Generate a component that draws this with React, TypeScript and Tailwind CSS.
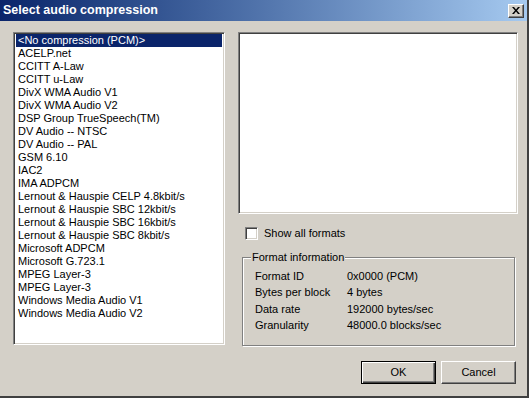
import React from "react";

const items = [
  "<No compression (PCM)>",
  "ACELP.net",
  "CCITT A-Law",
  "CCITT u-Law",
  "DivX WMA Audio V1",
  "DivX WMA Audio V2",
  "DSP Group TrueSpeech(TM)",
  "DV Audio -- NTSC",
  "DV Audio -- PAL",
  "GSM 6.10",
  "IAC2",
  "IMA ADPCM",
  "Lernout & Hauspie CELP 4.8kbit/s",
  "Lernout & Hauspie SBC 12kbit/s",
  "Lernout & Hauspie SBC 16kbit/s",
  "Lernout & Hauspie SBC 8kbit/s",
  "Microsoft ADPCM",
  "Microsoft G.723.1",
  "MPEG Layer-3",
  "MPEG Layer-3",
  "Windows Media Audio V1",
  "Windows Media Audio V2",
];

const info = [
  ["Format ID", "0x0000 (PCM)"],
  ["Bytes per block", "4 bytes"],
  ["Data rate", "192000 bytes/sec"],
  ["Granularity", "48000.0 blocks/sec"],
];

const sunken =
  "border border-t-[#808080] border-l-[#808080] border-r-white border-b-white shadow-[inset_1px_1px_0_#404040,inset_-1px_-1px_0_#d4d0c8]";

export default function App() {
  return (
    <div className="w-[529px] h-[398px] bg-[#d4d0c8] flex flex-col border-b-2 border-r-2 border-b-[#404040] border-r-[#404040] font-[Liberation_Sans,Arial,sans-serif] text-[11px] text-black overflow-hidden">
      {/* Title bar */}
      <div className="h-[21px] shrink-0 bg-gradient-to-r from-[#0a246a] to-[#a6caf0] flex items-center justify-between pl-[3px] pr-[3px]">
        <span className="text-white font-bold text-[12.5px] leading-none">Select audio compression</span>
        <div className="w-[16px] h-[14px] bg-[#d4d0c8] border border-t-white border-l-white border-r-[#404040] border-b-[#404040] shadow-[inset_-1px_-1px_0_#808080] flex items-center justify-center">
          <svg width="8" height="7" viewBox="0 0 8 7">
            <path d="M0 0h2l2 2.5L6 0h2L5 3.5 8 7H6L4 4.5 2 7H0l3-3.5z" fill="#000" />
          </svg>
        </div>
      </div>

      {/* Body */}
      <div className="flex flex-col pt-[11px]">
        <div className="flex pl-[13px] gap-[13px]">
          {/* List */}
          <div className={`w-[212px] h-[313px] bg-white ${sunken} p-[2px] pt-[1px]`}>
            <div className="flex flex-col">
              {items.map((it, i) => (
                <div
                  key={i}
                  className={`h-[13px] leading-[13px] pl-[2px] whitespace-nowrap ${
                    i === 0 ? "bg-[#0a246a] text-white" : ""
                  }`}
                >
                  {it}
                </div>
              ))}
            </div>
          </div>

          {/* Right column */}
          <div className="w-[280px] flex flex-col">
            <div className={`h-[182px] bg-white ${sunken}`} />
            <div className="flex items-center mt-[13px] ml-[7px] gap-[6px] h-[13px]">
              <div className={`w-[13px] h-[13px] bg-white ${sunken}`} />
              <span className="leading-[13px]">Show all formats</span>
            </div>
            <div className="relative mt-[17px] ml-[4px] w-[273px] h-[89px] border border-[#808080] shadow-[inset_1px_1px_0_#fff,1px_1px_0_#fff] pt-[10px] pl-[12px]">
              <span className="absolute left-[8px] top-[-8px] bg-[#d4d0c8] px-[1px] leading-[14px]">
                Format information
              </span>
              <div className="flex flex-col">
                {info.map(([k, v]) => (
                  <div key={k} className="flex h-[16.4px] leading-[16px]">
                    <span className="w-[92px]">{k}</span>
                    <span>{v}</span>
                  </div>
                ))}
              </div>
            </div>
          </div>
        </div>

        {/* Buttons */}
        <div className="flex justify-end gap-[5px] pr-[11px] mt-[15px]">
          <div className="w-[75px] h-[23px] border border-black bg-[#d4d0c8] shadow-[inset_1px_1px_0_#fff,inset_-1px_-1px_0_#404040,inset_-2px_-2px_0_#808080] flex items-center justify-center">
            OK
          </div>
          <div className="w-[75px] h-[23px] bg-[#d4d0c8] border border-t-white border-l-white border-r-[#404040] border-b-[#404040] shadow-[inset_-1px_-1px_0_#808080] flex items-center justify-center">
            Cancel
          </div>
        </div>
      </div>
    </div>
  );
}
